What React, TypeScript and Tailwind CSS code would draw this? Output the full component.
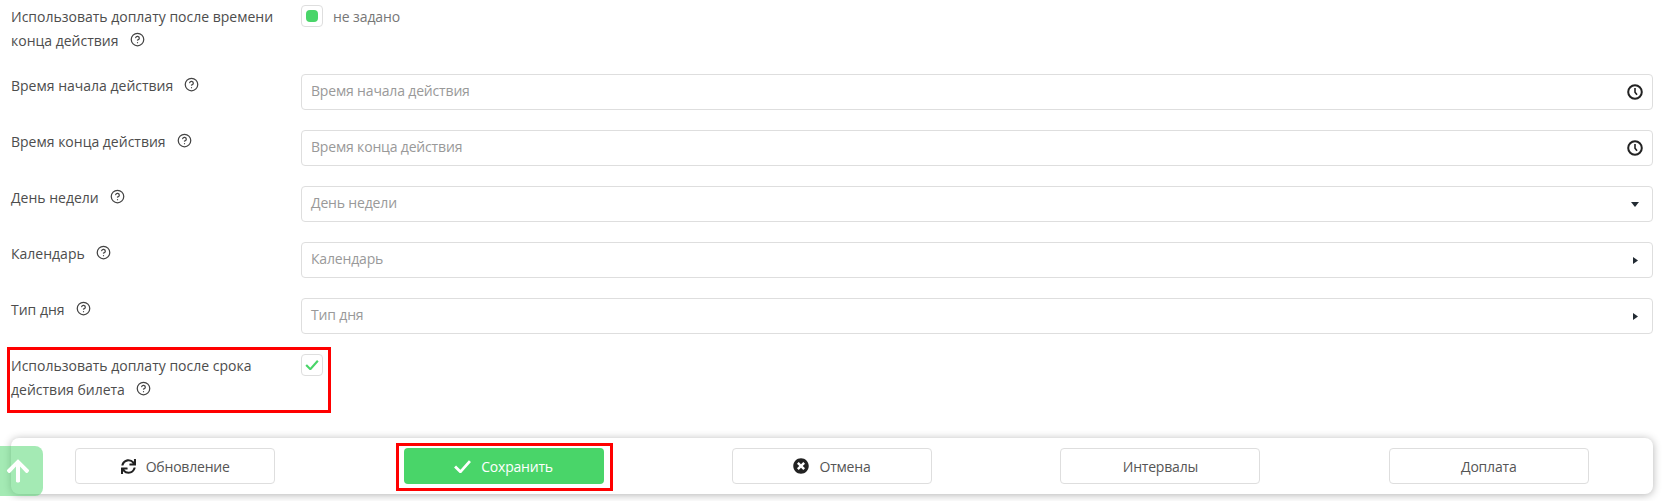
import React from 'react';
import { CircleHelp } from 'lucide-react';
import { FaArrowUp, FaSync, FaTimesCircle } from 'react-icons/fa';

function Help() {
  return <CircleHelp className="ml-[11px] inline-block h-[15px] w-[15px] align-[-1px] text-[#444]" strokeWidth={2} />;
}

function Label({ children }: { children: React.ReactNode }) {
  return <div className="w-[290px] shrink-0 pr-6 text-[14px] leading-[24px] font-medium text-[#4d4d4d]">{children}<Help /></div>;
}

function CaretDown() {
  return (
    <svg width="8" height="5" viewBox="0 0 8 5"><path d="M0 0h8L4 5z" fill="#222b33" /></svg>
  );
}

function CaretRight() {
  return (
    <svg width="5" height="7" viewBox="0 0 5 7"><path d="M0 0l5 3.5-5 3.5z" fill="#222b33" /></svg>
  );
}

function ClockIcon() {
  return (
    <svg width="16" height="16" viewBox="0 0 16 16" fill="none" stroke="#222" strokeWidth={2}>
      <circle cx="8" cy="8" r="6.8" />
      <path d="M8 4v4.2l2 2.6" strokeWidth={1.6} />
    </svg>
  );
}

function CheckMark({ className }: { className: string }) {
  return (
    <svg className={className} viewBox="0 0 16 12" fill="none" stroke="currentColor" strokeWidth={2.6}>
      <path d="M1 6l5 5L15 1" />
    </svg>
  );
}

function Field({ label, icon }: { label: string; icon: React.ReactNode }) {
  return (
    <div className="flex">
      <Label>{label}</Label>
      <div className="flex h-9 flex-1 items-center justify-between rounded border border-[#dedede] pr-[9px] pl-[9px] text-[14px] tracking-[-0.17px] text-[#999]">
        <span className="pb-[3px]">{label}</span>
        <span className="flex w-4 items-center justify-center">{icon}</span>
      </div>
    </div>
  );
}

function Button({ children, primary }: { children: React.ReactNode; primary?: boolean }) {
  return (
    <button
      className={primary
        ? 'flex h-9 w-[200px] items-center justify-center gap-[10px] rounded bg-[#49d569] text-[14px] tracking-[-0.2px] text-white'
        : 'flex h-9 w-[200px] items-center justify-center gap-[10px] rounded border border-[#dedede] bg-white text-[14px] tracking-[-0.2px] text-[#555]'}
    >
      {children}
    </button>
  );
}

export default function App() {
  return (
    <div className="relative h-[501px] w-[1666px] overflow-hidden bg-white font-['Open_Sans',sans-serif]">
      <div className="flex flex-col gap-5 pt-[5px] pr-[13px] pl-[11px]">
        <div className="flex h-[49px]">
          <Label>Использовать доплату после времени конца действия</Label>
          <div className="flex h-[22px] items-center gap-[10px] text-[14px] tracking-[-0.1px] text-[#777]">
            <div className="flex h-[22px] w-[22px] items-center justify-center rounded border border-[#dedede]">
              <div className="h-3 w-3 rounded-sm bg-[#49d569]" />
            </div>
            <span>не задано</span>
          </div>
        </div>
        <Field label="Время начала действия" icon={<ClockIcon />} />
        <Field label="Время конца действия" icon={<ClockIcon />} />
        <Field label="День недели" icon={<CaretDown />} />
        <Field label="Календарь" icon={<CaretRight />} />
        <Field label="Тип дня" icon={<CaretRight />} />
        <div className="relative flex">
          <Label>Использовать доплату после срока действия билета</Label>
          <div className="flex h-[22px] w-[22px] items-center justify-center rounded border border-[#dedede]">
            <CheckMark className="h-[10px] w-[14px] text-[#49d569]" />
          </div>
          <div className="pointer-events-none absolute top-[-7px] left-[-4px] h-[66px] w-[324px] border-[3px] border-[#f00]" />
        </div>
      </div>

      <div className="absolute top-[438px] left-[11px] flex h-14 w-[1642px] items-center justify-around rounded-lg bg-white shadow-[0_1px_8px_rgba(0,0,0,0.3)]">
        <Button><FaSync className="h-[15px] w-[15px] text-[#222]" /> Обновление</Button>
        <div className="relative">
          <Button primary><CheckMark className="h-[13px] w-[17px]" /> Сохранить</Button>
          <div className="pointer-events-none absolute top-[-5px] left-[-8px] h-[48px] w-[217px] border-[3px] border-[#f00]" />
        </div>
        <Button><FaTimesCircle className="h-4 w-4 text-[#222]" /> Отмена</Button>
        <Button>Интервалы</Button>
        <Button>Доплата</Button>
      </div>

      <div className="absolute top-[446px] left-[-7px] flex h-[50px] w-[50px] items-center justify-center rounded-lg bg-[#49d569]/50">
        <FaArrowUp className="h-[26px] w-[26px] text-white" />
      </div>
    </div>
  );
}
